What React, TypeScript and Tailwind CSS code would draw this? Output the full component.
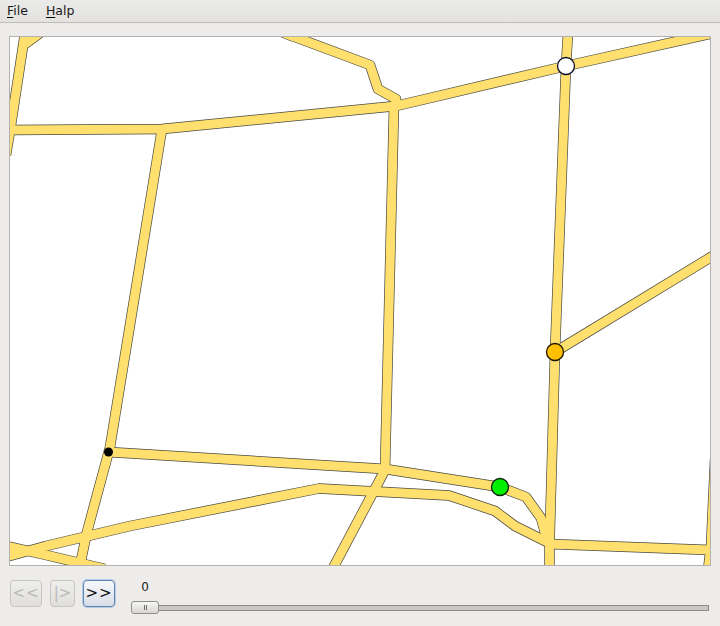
const roads = [
  '25,33 10.5,128 6,155',
  '40,33 25,44',
  '8,130 162,129 396,106 566,66 714,33',
  '294,37 284,33 370,65 378,89 396,99 395,108',
  '394,105 385,470',
  '162,129 110,447 87,532 79,570',
  '108,452 385,469 500,487 526,497 541,518 547,540',
  '385,470 332,570',
  '6,557 46,546 130,526 319,488.5 449,495.5 495,511 515,526 549,543',
  '6,546 46,555 105,569',
  '568,33 566,66 555,352 549.5,545 549.5,570',
  '555,352 716,254',
  '549,544 711,550',
  '715,460 711,546 708,570',
]

function RoadMap() {
  return (
    <svg viewBox="10 37 700 528" className="block h-[528px] w-[700px]">
      {roads.map((points) => (
        <polyline key={points} points={points} fill="none" stroke="#4a4a42" strokeWidth={10.4} strokeLinejoin="round" />
      ))}
      {roads.map((points) => (
        <polyline key={points} points={points} fill="none" stroke="#ffe06e" strokeWidth={9} strokeLinejoin="round" />
      ))}
      <circle cx={566} cy={66} r={8.5} fill="#ffffff" stroke="#10102a" strokeWidth={1.3} />
      <circle cx={555} cy={352} r={8.5} fill="#ffc000" stroke="#1a1400" strokeWidth={1.3} />
      <circle cx={500} cy={487} r={8.5} fill="#00f000" stroke="#0a200a" strokeWidth={1.3} />
      <circle cx={108.5} cy={452} r={4.5} fill="#000000" />
    </svg>
  )
}

function MenuItem({ first, rest }: { first: string; rest: string }) {
  return (
    <span className="text-[12.5px] leading-[22px] text-[#1a1a1a]">
      <span className="underline decoration-black underline-offset-2">{first}</span>
      {rest}
    </span>
  )
}

export default function App() {
  return (
    <div className="flex h-[626px] w-[720px] flex-col bg-[#edeceb] font-['DejaVu_Sans',sans-serif]">
      <div className="flex h-[23px] shrink-0 gap-[18px] border-b border-[#bdbcb8] bg-gradient-to-b from-[#eaeae8] to-[#e3e2df] pl-[7px]">
        <MenuItem first="F" rest="ile" />
        <MenuItem first="H" rest="alp" />
      </div>

      <div className="ml-[9px] mt-[13px] w-[702px] shrink-0 border border-[#b2b1ad] bg-white">
        <RoadMap />
      </div>

      <div className="flex flex-1 items-start pl-[10px] pt-[14px]">
        <button
          type="button"
          disabled
          className="h-[27px] w-[32px] rounded-[4px] border border-[#c6c5c2] bg-gradient-to-b from-[#eeeeec] to-[#e0dfdc] text-[15px] leading-none tracking-[1px] text-[#b8b8b6]"
        >
          {'<<'}
        </button>
        <button
          type="button"
          disabled
          className="ml-[8px] h-[27px] w-[25px] rounded-[4px] border border-[#c6c5c2] bg-gradient-to-b from-[#eeeeec] to-[#e0dfdc] text-[15px] leading-none text-[#b8b8b6]"
        >
          {'|>'}
        </button>
        <button
          type="button"
          className="ml-[8px] h-[27px] w-[32px] rounded-[4px] border border-[#5c84b4] bg-gradient-to-b from-[#f6f8fb] to-[#d9dee6] text-[15px] leading-none tracking-[1px] text-[#111111] shadow-[0_0_0_1px_#b9cbe0]"
        >
          {'>>'}
        </button>

        <div className="ml-[16px] flex flex-1 flex-col pr-[11px]">
          <span className="w-[28px] text-center text-[12px] leading-[14px] text-[#222222]">0</span>
          <div className="mt-[7px] flex h-[13px] items-center">
            <div className="z-10 flex h-[13px] w-[28px] items-center justify-center gap-[1px] rounded-[3px] border border-[#8f8e8a] bg-gradient-to-b from-[#f6f6f4] to-[#d8d7d4]">
              <span className="h-[5px] w-[1px] bg-[#6c6b68]" />
              <span className="h-[5px] w-[1px] bg-[#6c6b68]" />
            </div>
            <div className="-ml-[1px] h-[6px] flex-1 border border-[#8d8c88] bg-[#c9c8c5]" />
          </div>
        </div>
      </div>
    </div>
  )
}
